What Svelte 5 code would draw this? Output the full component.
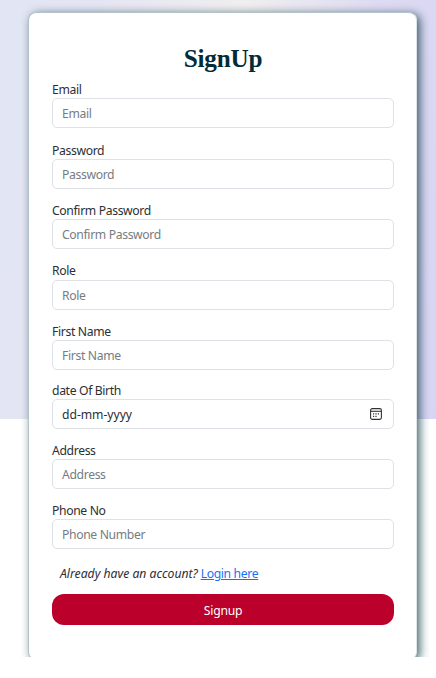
<script>
  const fields = [
    { label: 'Email', hint: 'Email', size: 60.4 },
    { label: 'Password', hint: 'Password', size: 60.4 },
    { label: 'Confirm Password', hint: 'Confirm Password', size: 60.4 },
    { label: 'Role', hint: 'Role', size: 60.4 },
    { label: 'First Name', hint: 'First Name', size: 59 },
    { label: 'date Of Birth', hint: 'dd-mm-yyyy', size: 60, date: true },
    { label: 'Address', hint: 'Address', size: 60 },
    { label: 'Phone No', hint: 'Phone Number', size: 60 }
  ];
</script>

<div class="page">
  <main class="card">
    <h1>SignUp</h1>
    {#each fields as f}
      <div class="field" style="height: {f.size}px">
        <span class="label">{f.label}</span>
        <div class="input" class:date={f.date}>
          <span>{f.hint}</span>
          {#if f.date}
            <svg width="12" height="12" viewBox="0 0 12 12" fill="none" stroke="#333">
              <rect x="0.6" y="0.6" width="10.8" height="10.8" rx="1.6" stroke-width="1.1" />
              <path d="M.6 3.3h10.8" stroke-width="1.1" />
              <path d="M5.4 5.8h1.2M7.8 5.8h1.2M3 5.8h1.2M3 8.3h1.2M5.4 8.3h1.2" stroke-width="1.2" />
            </svg>
          {/if}
        </div>
      </div>
    {/each}
    <p><em>Already have an account?</em> <a href="#login">Login here</a></p>
    <button>Signup</button>
  </main>
</div>

<style>
  :global(body) {
    background: #fff;
  }
  .page {
    box-sizing: border-box;
    height: 657px;
    padding: 12px 19px 0 28px;
    overflow: hidden;
    background: linear-gradient(97deg, #e2e5f5 0%, #e4e5f3 20%, #efefef 50%, #dddbf2 78%, #d7d5f3 100%) 0 0 / 100% 419px no-repeat, #fefffe;
    font-family: "Noto Sans", "Open Sans", sans-serif;
    font-size: 12.2px;
    letter-spacing: -0.36px;
    color: #2b2f33;
  }
  .card {
    box-sizing: border-box;
    height: 648px;
    padding: 31px 22px 0 23px;
    border: 1px solid #b5c2c7;
    border-right-color: #dfe5e7;
    border-radius: 8px;
    background: #fff;
    box-shadow: 3px 2px 10px 0 rgba(4, 48, 62, 0.72);
  }
  h1 {
    margin: 0;
    height: 37.3px;
    font: bold 25.2px/30px "Liberation Serif", serif;
    letter-spacing: -0.2px;
    text-align: center;
    color: #022b3a;
  }
  .field {
    display: flex;
    flex-direction: column;
  }
  .label {
    height: 17.2px;
    line-height: 18px;
  }
  .input {
    box-sizing: border-box;
    height: 30px;
    display: flex;
    align-items: center;
    justify-content: space-between;
    padding: 1px 11px 0 9px;
    border: 1px solid #dee2e6;
    border-radius: 5px;
    color: #767c82;
  }
  .date {
    color: #2b2f33;
    letter-spacing: -0.05px;
  }
  .date svg {
    margin-bottom: 2px;
  }
  em {
    letter-spacing: 0;
  }
  p {
    margin: 0;
    height: 32px;
    padding: 3px 0 0 8px;
    box-sizing: border-box;
    line-height: 18px;
  }
  a {
    color: #1a6ff5;
  }
  button {
    display: block;
    width: 100%;
    height: 31px;
    padding: 2px 0 0;
    border: 0;
    border-radius: 12px;
    background: #ba002b;
    color: #fff;
    font: inherit;
    letter-spacing: -0.25px;
  }
</style>
